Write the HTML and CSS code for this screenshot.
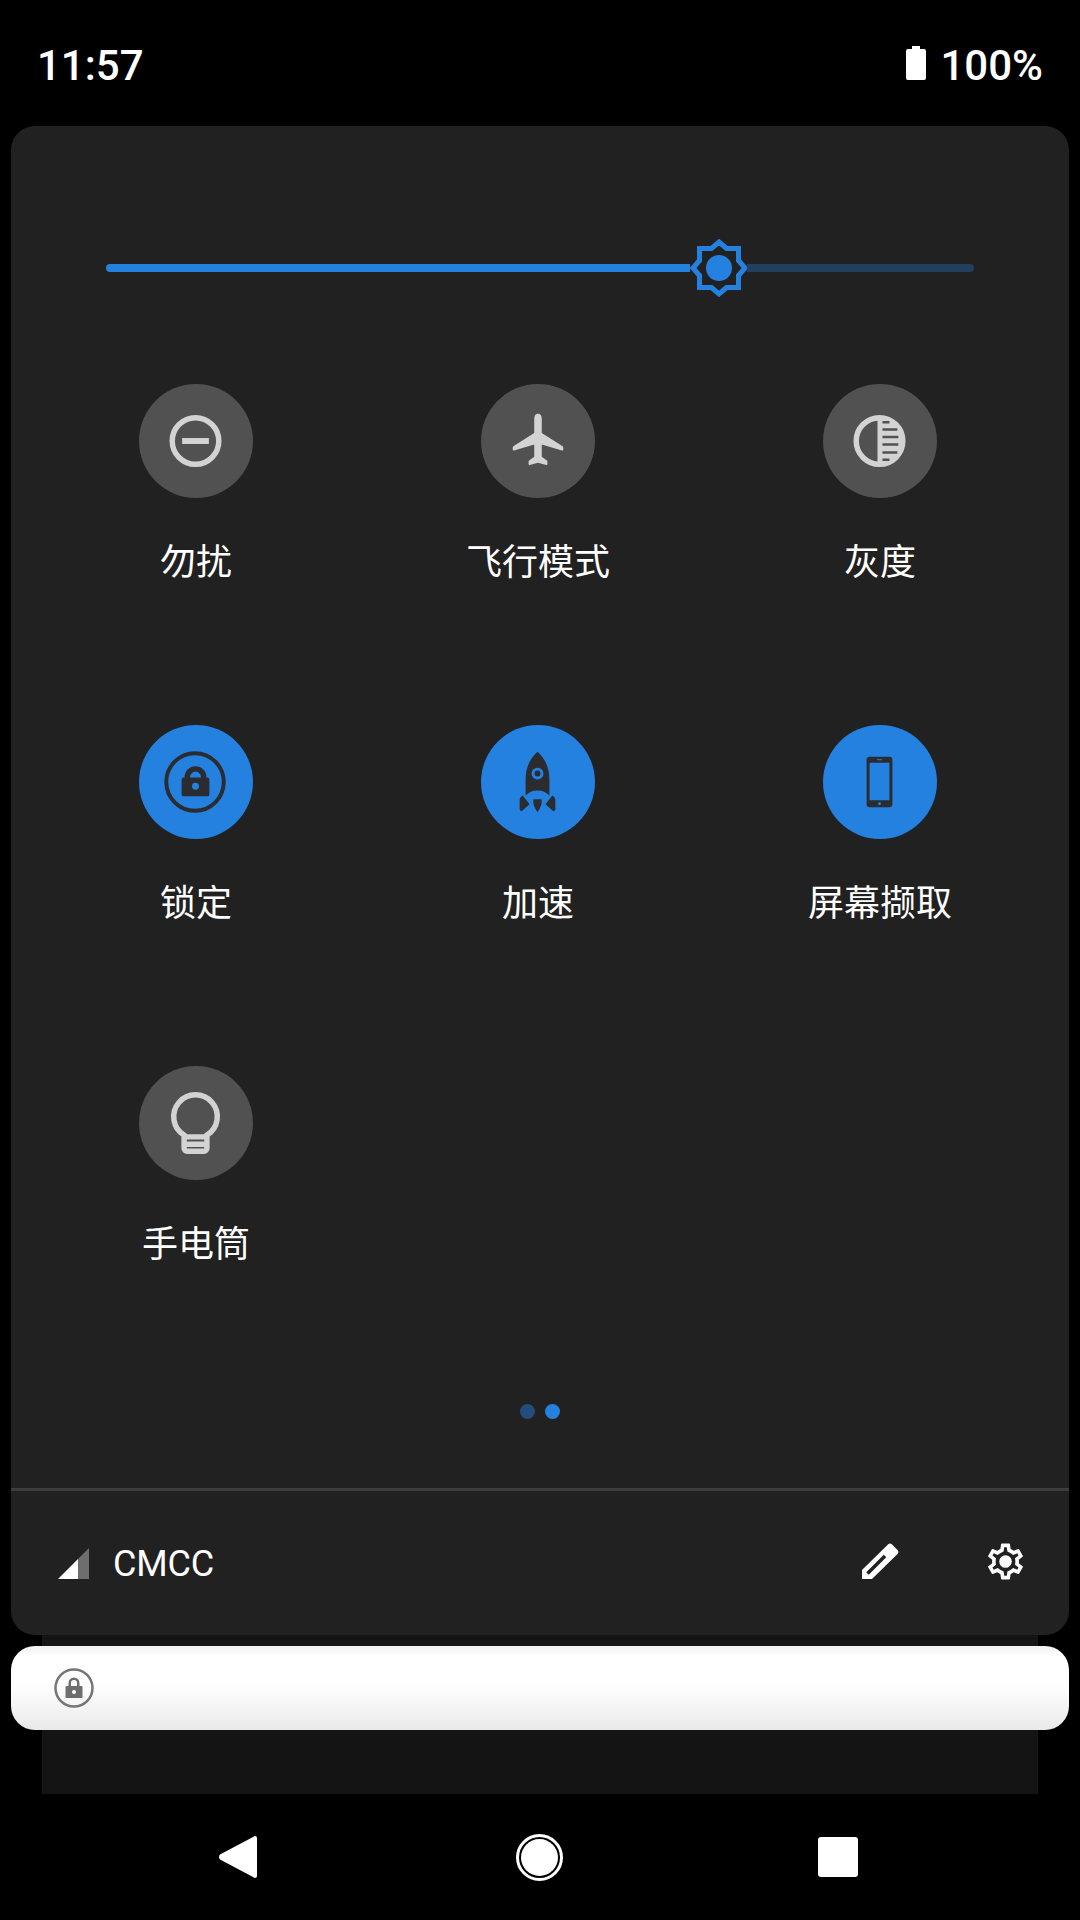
FILE: index.html
```html
<!DOCTYPE html>
<html lang="zh-CN">
<head>
    <meta charset="UTF-8">
    <meta name="viewport" content="width=device-width, initial-scale=1.0">
    <title>快速设置</title>
    <link rel="stylesheet" href="styles.css">
</head>
<body>
    <div class="status-bar">
        <span class="clock">11:57</span>
        <div class="battery">
            <svg class="battery-icon" viewBox="0 0 20 34"><path d="M6 0h8v3h4a2 2 0 0 1 2 2v27a2 2 0 0 1-2 2H2a2 2 0 0 1-2-2V5a2 2 0 0 1 2-2h4z"/></svg>
            <span>100%</span>
        </div>
    </div>

    <div class="panel">
        <div class="slider">
            <div class="slider-on"></div>
            <svg class="slider-thumb" viewBox="0 0 60 60">
                <path class="thumb-star" d="M30 4l7.500 6.500h12v12L56 30l-6.500 7.500v12h-12L30 56l-7.500-6.500h-12v-12L4 30l6.500-7.500v-12h12z"/>
                <circle class="thumb-dot" cx="30" cy="30" r="13"/>
            </svg>
            <div class="slider-off"></div>
        </div>

        <div class="tiles">
            <div class="tile">
                <div class="tile-icon">
                    <svg viewBox="0 0 115 115"><circle class="line" cx="57" cy="57.500" r="23.500"/><rect class="fill" x="43.500" y="54.500" width="27" height="6"/></svg>
                </div>
                <div class="tile-label">勿扰</div>
            </div>
            <div class="tile">
                <div class="tile-icon">
                    <svg viewBox="0 0 115 115"><path class="fill" d="M57.500 30c2.400 0 3.800 2 3.800 5v14.500l20.700 13c.6.400 1 1 1 1.800v1.700c0 .8-.7 1.200-1.400 1L61.300 61v12.500l5.200 3.700c.4.300.5.700.5 1.100V81c0 .6-.5 1-1.100.8l-8.400-2.300-8.400 2.300c-.6.200-1.100-.2-1.100-.8v-2.700c0-.4.100-.8.500-1.100l5.200-3.700V61l-20.300 6c-.7.200-1.400-.2-1.400-1v-1.700c0-.8.400-1.400 1-1.800l20.700-13V35c0-3 1.400-5 3.800-5z"/></svg>
                </div>
                <div class="tile-label">飞行模式</div>
            </div>
            <div class="tile">
                <div class="tile-icon">
                    <svg viewBox="0 0 115 115"><circle class="line" cx="57" cy="57.500" r="23.500"/><path class="fill" d="M55 34h2a23.500 23.500 0 0 1 0 47h-2z"/><path class="bars" d="M60 38.500h7M60 46h15M60 53.500h16M60 61h16M60 69h15M60 76.500h7"/></svg>
                </div>
                <div class="tile-label">灰度</div>
            </div>
            <div class="tile tile-on">
                <div class="tile-icon">
                    <svg viewBox="0 0 115 115"><circle class="line" cx="56.500" cy="57.500" r="29"/><path class="fill" d="M45 53h1v-.500a11 11 0 0 1 22 0v.500h1a2 2 0 0 1 2 2v15a2 2 0 0 1-2 2H45a2 2 0 0 1-2-2V55a2 2 0 0 1 2-2zm6.500-.500v.500h11v-.500a5.500 5.500 0 0 0-11 0z"/><circle class="cut" cx="57" cy="61.700" r="3.500"/></svg>
                </div>
                <div class="tile-label">锁定</div>
            </div>
            <div class="tile tile-on">
                <div class="tile-icon">
                    <svg viewBox="0 0 115 115"><path class="fill" d="M57 27c8 7 12 17 12 28v16c-3-3-7-5-12-5s-9 2-12 5V55c0-11 4-21 12-28z"/><circle class="cut" cx="57" cy="49" r="6"/><circle class="fill" cx="57" cy="49" r="3"/><path class="fill" d="M42 71l7 9-8 7c-1 0-2-1-2-2v-9c0-2 1-4 3-5zM72 71l-7 9 8 7c1 0 2-1 2-2v-9c0-2-1-4-3-5zM53 75h8c1 4-1 9-4 13-3-4-5-9-4-13z"/></svg>
                </div>
                <div class="tile-label">加速</div>
            </div>
            <div class="tile tile-on">
                <div class="tile-icon">
                    <svg viewBox="0 0 115 115"><path class="fill" d="M47 32h20a3 3 0 0 1 3 3v45a3 3 0 0 1-3 3H47a3 3 0 0 1-3-3V35a3 3 0 0 1 3-3zm0 6v38h20V38z"/><rect class="cut" x="54.500" y="34.500" width="5" height="1"/><circle class="cut" cx="57" cy="79.500" r="1.500"/></svg>
                </div>
                <div class="tile-label">屏幕撷取</div>
            </div>
            <div class="tile">
                <div class="tile-icon">
                    <svg viewBox="0 0 115 115"><path class="line" d="M45.500 69.800A22 22 0 1 1 68.500 69.800V83a3 3 0 0 1-3 3h-17a3 3 0 0 1-3-3zM45.500 71.500h23M45.500 79h23"/></svg>
                </div>
                <div class="tile-label">手电筒</div>
            </div>
        </div>

        <div class="pager">
            <span class="pager-dot"></span>
            <span class="pager-dot pager-dot-on"></span>
        </div>

        <div class="panel-footer">
            <svg class="signal" viewBox="0 0 31 31"><path class="signal-off" d="M31 0v31H20V11z"/><path class="signal-on" d="M20 11v20H0z"/></svg>
            <span class="carrier">CMCC</span>
            <svg class="edit" viewBox="0 0 38 36"><path class="edit-body" d="M1 36v-9L27 1.500a3 3 0 0 1 4 0L36.500 7a3 3 0 0 1 0 4L11 36z"/><path class="edit-slot" d="M6.500 30.500L24 13"/></svg>
            <svg class="gear" viewBox="0 0 24 24"><path d="M19.430 12.980c.04-.32.07-.64.07-.98 0-.34-.03-.66-.07-.98l2.110-1.650c.19-.15.24-.42.12-.64l-2-3.460c-.09-.16-.26-.25-.44-.25-.06 0-.12.01-.17.03l-2.490 1c-.52-.4-1.080-.73-1.690-.98l-.38-2.650C14.460 2.180 14.250 2 14 2h-4c-.25 0-.46.18-.49.42l-.38 2.650c-.61.25-1.170.59-1.690.98l-2.490-1c-.06-.02-.12-.03-.18-.03-.17 0-.34.09-.43.25l-2 3.460c-.13.22-.07.49.12.64l2.110 1.650c-.04.32-.07.65-.07.98 0 .33.03.66.07.98l-2.110 1.650c-.19.15-.24.42-.12.64l2 3.460c.09.16.26.25.44.25.06 0 .12-.01.17-.03l2.490-1c.52.4 1.080.73 1.690.98l.38 2.650c.03.24.24.42.49.42h4c.25 0 .46-.18.49-.42l.38-2.650c.61-.25 1.170-.59 1.690-.98l2.490 1c.06.02.12.03.18.03.17 0 .34-.09.43-.25l2-3.460c.12-.22.07-.49-.12-.64l-2.110-1.650zm-1.980-1.710c.04.31.05.52.05.73 0 .21-.02.43-.05.73l-.14 1.130.89.7 1.080.84-.7 1.210-1.270-.51-1.040-.42-.9.68c-.43.32-.84.56-1.250.73l-1.060.43-.16 1.130-.2 1.350h-1.400l-.19-1.350-.16-1.130-1.060-.43c-.43-.18-.83-.41-1.230-.71l-.91-.7-1.060.43-1.270.51-.7-1.210 1.080-.84.89-.7-.14-1.130c-.03-.31-.05-.54-.05-.74s.02-.43.05-.73l.14-1.130-.89-.7-1.080-.84.7-1.210 1.270.51 1.040.42.9-.68c.43-.32.84-.56 1.250-.73l1.060-.43.16-1.130.2-1.350h1.390l.19 1.350.16 1.130 1.060.43c.43.18.83.41 1.230.71l.91.7 1.060-.43 1.270-.51.7 1.210-1.070.85-.89.7.14 1.130z"/><circle cx="12" cy="12" r="3.500"/></svg>
        </div>
    </div>

    <div class="sheet">
        <div class="notification">
            <svg class="notification-icon" viewBox="0 0 40 40"><circle class="ring" cx="20" cy="20" r="18.500"/><path class="padlock" d="M12.500 18h2v-3a5.500 5.500 0 0 1 11 0v3h2a1 1 0 0 1 1 1v10a1 1 0 0 1-1 1h-15a1 1 0 0 1-1-1V19a1 1 0 0 1 1-1zm4.500 0h6v-3a3 3 0 0 0-6 0z"/><circle class="keyhole" cx="20" cy="24" r="2"/></svg>
        </div>
    </div>

    <div class="nav-bar">
        <svg class="nav-back" viewBox="0 0 38 42"><path d="M36 0a2 2 0 0 1 2 2v38a2 2 0 0 1-2 2 2 2 0 0 1-1.500-.7L1 23.500a4 4 0 0 1 0-5L34.500.7A2 2 0 0 1 36 0z"/></svg>
        <svg class="nav-home" viewBox="0 0 47 47"><circle class="home-ring" cx="23.500" cy="23.500" r="22"/><circle class="home-disc" cx="23.500" cy="23.500" r="18.500"/></svg>
        <div class="nav-recents"></div>
    </div>
</body>
</html>
```

FILE: styles.css
```css
* {
    box-sizing: border-box;
}
body {
    margin: 0;
    width: 1080px;
    height: 1920px;
    overflow: hidden;
    background-color: #000;
    color: #fff;
    font-family: Roboto, "Noto Sans CJK SC", sans-serif;
}
svg {
    display: block;
}

/* status bar */
.status-bar {
    height: 126px;
    padding: 6px 37px 0 37px;
    display: flex;
    align-items: center;
    justify-content: space-between;
    font-size: 42px;
    font-weight: 500;
}
.status-bar span {
    line-height: 1;
}
.battery {
    display: flex;
    align-items: center;
    gap: 14px;
}
.battery-icon {
    width: 20px;
    height: 34px;
    margin-top: -6px;
    fill: #fff;
}

/* panel */
.panel {
    margin: 0 11px;
    height: 1509px;
    border-radius: 24px;
    background-color: #212121;
    display: flex;
    flex-direction: column;
}
.slider {
    margin: 112px 95px 0 95px;
    height: 60px;
    display: flex;
    align-items: center;
}
.slider-on {
    width: 584px;
    height: 8px;
    border-radius: 4px 0 0 4px;
    background-color: #2481e0;
}
.slider-thumb {
    flex: none;
    width: 60px;
    height: 60px;
    margin: 0 -2px 0 -1px;
}
.thumb-star {
    fill: #212121;
    stroke: #2481e0;
    stroke-width: 5;
}
.thumb-dot {
    fill: #2481e0;
}
.slider-off {
    flex: 1;
    height: 8px;
    border-radius: 0 4px 4px 0;
    background-color: #233f5e;
}

/* tiles */
.tiles {
    margin-top: 86px;
    padding: 0 18px 0 14px;
    display: grid;
    grid-template-columns: repeat(3, 342px);
    grid-template-rows: 341px 341px 320px;
}
.tile {
    display: flex;
    flex-direction: column;
    align-items: center;
}
.tile-icon {
    width: 114px;
    height: 114px;
    border-radius: 50%;
    background-color: #515151;
    --glyph: #d3d3d3;
    --cut: #515151;
}
.tile-on .tile-icon {
    background-color: #2481e0;
    --glyph: #2a2c30;
    --cut: #2481e0;
}
.tile-label {
    margin-top: 38px;
    font-size: 36px;
    line-height: 54px;
}
.fill {
    fill: var(--glyph);
}
.cut {
    fill: var(--cut);
}
.line {
    fill: none;
    stroke: var(--glyph);
    stroke-width: 5.500;
}
.tile-on .line {
    stroke-width: 4;
}
.bars {
    fill: none;
    stroke: var(--cut);
    stroke-width: 2.500;
}

/* pager */
.pager {
    margin-top: 18px;
    height: 15px;
    display: flex;
    justify-content: center;
    gap: 10px;
    padding-right: 1px;
}
.pager-dot {
    width: 15px;
    height: 15px;
    border-radius: 50%;
    background-color: #234d7c;
}
.pager-dot-on {
    background-color: #2481e0;
}

/* panel footer */
.panel-footer {
    margin-top: 69px;
    flex: 1;
    border-top: 3px solid #3d3d3d;
    padding: 0 42px 0 47px;
    display: flex;
    align-items: center;
}
.signal {
    width: 31px;
    height: 31px;
    margin-right: 24px;
}
.signal-on {
    fill: #fff;
}
.signal-off {
    fill: #6e6e6e;
}
.carrier {
    flex: 1;
    padding-top: 2px;
    font-size: 36px;
    letter-spacing: -0.2px;
}
.edit {
    width: 38px;
    height: 36px;
    margin: 0 85px 4px 0;
}
.edit-body {
    fill: #fff;
}
.edit-slot {
    fill: none;
    stroke: #212121;
    stroke-width: 3.500;
}
.gear {
    width: 43px;
    height: 43px;
    margin-bottom: 4px;
    fill: #fff;
}

/* notification */
.sheet {
    margin: 0 42px;
    height: 159px;
    padding-top: 11px;
    background-color: #141414;
}
.notification {
    margin: 0 -31px;
    height: 84px;
    padding-left: 43px;
    border-radius: 24px;
    background: linear-gradient(#f0f0f0, #fff 12%, #fff 45%, #f6f6f6 70%, #e9e9e9);
    display: flex;
    align-items: center;
}
.notification-icon {
    width: 40px;
    height: 40px;
}
.ring {
    fill: none;
    stroke: #757575;
    stroke-width: 2.500;
}
.padlock {
    fill: #6e6e6e;
}
.keyhole {
    fill: #fff;
}

/* nav bar */
.nav-bar {
    height: 126px;
    padding-left: 219px;
    display: flex;
    align-items: center;
}
.nav-back {
    width: 38px;
    height: 42px;
    fill: #fff;
}
.nav-home {
    width: 47px;
    height: 47px;
    margin-left: 259px;
}
.home-ring {
    fill: none;
    stroke: #fff;
    stroke-width: 3;
}
.home-disc {
    fill: #fff;
}
.nav-recents {
    width: 40px;
    height: 40px;
    margin-left: 255px;
    border-radius: 3px;
    background-color: #fff;
}
```
